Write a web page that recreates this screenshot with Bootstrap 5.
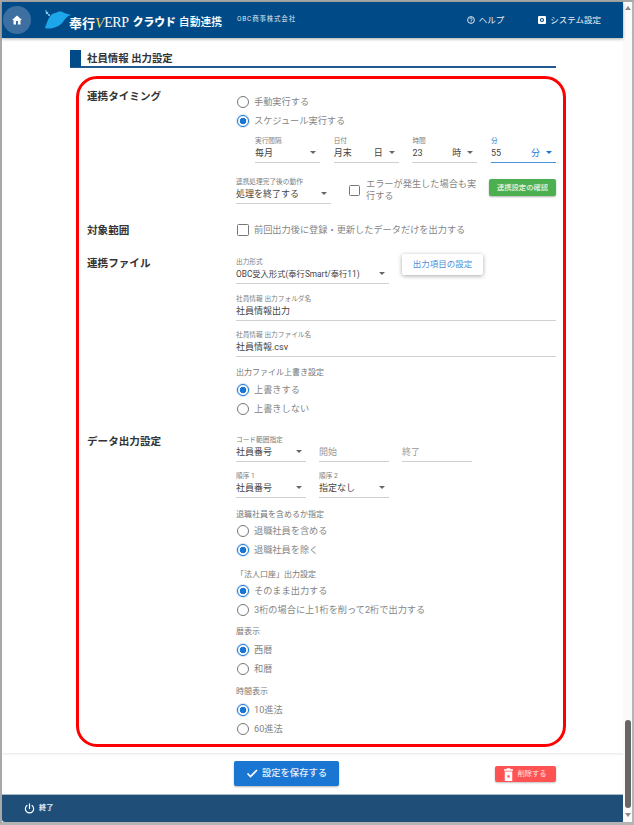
<!DOCTYPE html>
<html lang="ja">
<head>
    <meta charset="UTF-8">
    <meta name="viewport" content="width=device-width, initial-scale=1.0">
    <title>社員情報 出力設定</title>
    <link href="https://cdn.jsdelivr.net/npm/bootstrap@5.3.0/dist/css/bootstrap.min.css" rel="stylesheet">
    <style>
        html, body { height: 100%; overflow: hidden; }
        body {
            font-family: Roboto, "Noto Sans CJK JP", sans-serif;
            font-size: 9.2px;
            color: #333;
            background: #fff;
        }
        .shell {
            height: 825px;
            border-top: 2px solid #a8a8a8;
            border-left: 2px solid #a8a8a8;
            border-bottom: 3px solid #b4b4b4;
            border-right: 2px solid #b4b4b4;
        }
        .main { width: 621px; flex: none; }

        /* header */
        .app-header {
            height: 36px;
            background: #004b87;
            box-shadow: 0 1px 3px rgba(0, 0, 0, .35);
            padding: 0;
            flex-wrap: nowrap;
            justify-content: flex-start;
            color: #fff;
        }
        .home-btn {
            width: 28px;
            height: 28px;
            margin-left: 1px;
            background: #3d70a0;
        }
        .logo { margin-left: 13px; width: 189px; line-height: 1; white-space: nowrap; }
        .logo-word { padding-top: 6px; }
        .logo-hoko { font-size: 13px; font-weight: 700; margin-left: -2px; }
        .logo-v { font-family: "Liberation Serif", serif; font-style: italic; font-size: 15px; color: #f1d35c; }
        .logo-erp { font-family: "Liberation Serif", serif; font-size: 14px; letter-spacing: -.4px; }
        .logo-cloud { font-size: 10.8px; font-weight: 900; margin-left: 4px; }
        .logo-sync { font-size: 10.8px; font-weight: 500; margin-left: 3px; }
        .company { font-size: 6.5px; letter-spacing: .8px; margin-left: 4px; color: #dfe8f0; }
        .head-link { font-size: 8.5px; color: #e8eef4; text-decoration: none; }
        .head-help { margin-left: auto; margin-right: 34px; }
        .head-system { margin-right: 22px; }

        /* scroll area */
        .content { flex: 1; min-height: 0; overflow: hidden; padding: 13px 67px 0 68px; }
        .page-title {
            height: 17px;
            border-bottom: 2px solid #20598f;
            font-size: 10.4px;
            font-weight: 700;
        }
        .page-title::before { content: ""; width: 11px; height: 17px; background: #004b87; margin-right: 6px; }
        .frame {
            width: 490px;
            height: 671px;
            margin: 8px 0 0 6px;
            border: 3px solid #f00;
            border-radius: 21px;
            padding: 8px 7px 0 8px;
        }
        .sec-title { width: 149px; flex: none; font-size: 10.6px; font-weight: 700; line-height: 20px; }
        .sec-body { width: 320px; flex: none; }

        /* radio and checkbox */
        .opt { min-height: 0; height: 18.5px; padding: 0; margin: 0; display: flex; align-items: center; }
        .opt .form-check-input {
            float: none;
            width: 12px;
            height: 12px;
            margin: 0 5px 0 1px;
            flex: none;
            background-image: none;
            background-color: #fff;
            border: 1.4px solid #777;
        }
        .opt .form-check-input[type=radio]:checked {
            border-color: #1976d2;
            background-image: radial-gradient(circle, #1976d2 0, #1976d2 3px, #fff 3.6px);
            box-shadow: 0 0 0 1px #d6e6f6;
        }
        .opt .form-check-input[type=checkbox] { border-radius: 1.5px; }
        .opt .form-check-label { color: #858585; line-height: 12px; }
        .check-wrap { width: 130px; height: 26px; margin-left: 17px; }
        .check-wrap .form-check-input { width: 11px; height: 11px; margin-right: 6px; }

        /* floating fields */
        .fld { display: block; height: 27px; flex: none; }
        .fld-label { display: block; font-size: 6.7px; line-height: 10px; color: #7c7c7c; white-space: nowrap; }
        .fld-box {
            display: flex;
            align-items: center;
            width: 100%;
            height: 17px;
            padding: 0 0 3px;
            border: 0;
            border-bottom: 1.5px solid #d0d0d0;
            border-radius: 0;
            background: transparent;
            font-size: 9px;
            line-height: 12px;
            color: #444;
            box-shadow: none;
        }
        .fld-box::placeholder { color: #999; }
        .fld-box.dropdown-toggle::after {
            margin-left: 6px;
            margin-right: 4px;
            border-top-width: 3px;
            border-left-width: 3px;
            border-right-width: 3px;
            color: #666;
        }
        .suffix { margin-left: auto; }
        .fld-on .fld-label, .fld-on .fld-box, .fld-on .dropdown-toggle::after { color: #1976d2; }
        .fld-on .fld-box { border-bottom-color: #4a90e0; color: #1976d2; }
        .fld-on .value { color: #444; }
        .timing-row { margin-left: 19px; column-gap: 13.7px; }
        .w-sm { width: 65px; }
        .w-select { width: 95px; }
        .w-format { width: 153px; }
        .w-format .fld-box { font-size: 8.3px; }
        .w-full { width: 320px; }
        .w-code { width: 69.5px; }
        .code-row { column-gap: 13.5px; }
        .group-label { font-size: 8px; line-height: 14px; color: #777; }

        /* buttons */
        .btn-confirm {
            width: 67px;
            height: 17px;
            margin: 2px 0 0 11px;
            padding: 0;
            font-size: 7.3px;
            font-weight: 500;
            line-height: 17px;
            color: #eaf5ea;
            background: #4caf50;
            border: 0;
            border-radius: 2px;
            box-shadow: 0 1px 2px rgba(0, 0, 0, .3);
        }
        .btn-items {
            width: 81px;
            height: 21px;
            margin: 0 0 0 13px;
            padding: 0;
            font-size: 8.5px;
            color: #4a90d9;
            background: #fff;
            border: 0;
            border-radius: 2px;
            box-shadow: 0 1px 4px rgba(0, 0, 0, .35);
        }
        .action-bar {
            height: 41px;
            padding: 0 67px 0 232px;
            border-top: 1px solid #eee;
            box-shadow: inset 0 2px 2px -1px rgba(0, 0, 0, .05);
        }
        .btn-save {
            width: 105px;
            height: 25px;
            padding: 0;
            margin-top: -2px;
            font-size: 9.3px;
            font-weight: 500;
            color: #e8f1fa;
            background: #1976d2;
            border: 0;
            border-radius: 2px;
            box-shadow: 0 1px 2px rgba(0, 0, 0, .3);
        }
        .btn-delete {
            width: 61px;
            height: 16px;
            padding: 0;
            font-size: 7.3px;
            color: #ffe3e3;
            background: #ff5252;
            border: 0;
            border-radius: 2px;
            box-shadow: 0 1px 2px rgba(0, 0, 0, .25);
        }
        .app-footer {
            height: 28px;
            padding-left: 22px;
            background: #1f4e79;
            border-top: 1px solid #a9b9c8;
            border-bottom-left-radius: 3px;
            color: #e8eef4;
            font-size: 7.2px;
            font-weight: 700;
        }

        /* fake scrollbar */
        .scroll-rail { width: 9px; flex: none; background: #fafafa; padding: 0 1px; }
        .scroll-thumb { width: 6px; height: 88px; margin: auto auto 0; background: #666; border-radius: 3px; }
        .arrow-up, .arrow-down { width: 0; height: 0; margin: 4px auto; border: 3px solid transparent; }
        .arrow-up { border-top: 0; border-bottom: 4px solid #8a8a8a; }
        .arrow-down { border-bottom: 0; border-top: 4px solid #8a8a8a; margin-top: 5px; margin-bottom: 5px; }

        .mt-1px { margin-top: 1px; }
        .mt-2px { margin-top: 2px; }
        .mt-3px { margin-top: 3px; }
        .mt-6px { margin-top: 6px; }
        .mt-7px { margin-top: 7px; }
        .mt-9px { margin-top: 9px; }
        .mt-10px { margin-top: 10px; }
        .mt-13px { margin-top: 13px; }
        .mt-14px { margin-top: 14px; }
        .mt-17px { margin-top: 17px; }
    </style>
</head>
<body>
<div class="shell d-flex">
    <div class="main d-flex flex-column">
        <nav class="navbar app-header">
            <a class="home-btn rounded-circle d-flex align-items-center justify-content-center" href="#" aria-label="ホーム">
                <svg width="12" height="12" viewBox="0 0 24 24" fill="#fff"><path d="M10 21v-7h4v7h5v-9h3L12 3 2 12h3v9z"/></svg>
            </a>
            <div class="logo d-flex align-items-center">
                <svg width="27" height="20" viewBox="0 0 27 20">
                    <path d="M1 18C2 15 3 12 5 8 6 5 9 3 12 3c2-2 6-2 8 0l7 2c-4 1-6 4-8 7-2 3-6 5-10 6-3 .5-6 1-8 0z" fill="#1ea6ea"/>
                    <circle cx="3" cy="3" r="1.3" fill="#7fd0f5"/><circle cx="5" cy="5" r="1" fill="#7fd0f5"/><circle cx="2" cy="1" r=".8" fill="#7fd0f5"/>
                </svg>
                <div class="logo-word d-flex align-items-center">
                    <span class="logo-hoko">奉行</span><span class="logo-v">V</span><span class="logo-erp">ERP</span><span class="logo-cloud">クラウド</span><span class="logo-sync">自動連携</span>
                </div>
            </div>
            <span class="company">OBC商事株式会社</span>
            <a class="head-link head-help d-flex align-items-center gap-1" href="#">
                <svg width="8" height="8" viewBox="0 0 16 16" fill="none" stroke="#fff" stroke-width="1.7"><circle cx="8" cy="8" r="6.8"/><path d="M5.6 6.2a2.4 2.4 0 1 1 3.6 2.1c-.8.5-1.2.9-1.2 1.8M8 11.200v1.600"/></svg>
                ヘルプ
            </a>
            <a class="head-link head-system d-flex align-items-center gap-1" href="#">
                <svg width="8" height="8" viewBox="0 0 16 16"><rect width="16" height="16" rx="2" fill="#fff"/><circle cx="8" cy="8" r="3" fill="none" stroke="#004b87" stroke-width="2.2"/></svg>
                システム設定
            </a>
        </nav>

        <div class="content">
            <div class="page-title d-flex align-items-center">社員情報 出力設定</div>

            <form class="frame">
                <div class="d-flex">
                    <div class="sec-title">連携タイミング</div>
                    <div class="sec-body">
                        <div class="form-check opt mt-6px">
                            <input class="form-check-input" type="radio" name="run" id="run1">
                            <label class="form-check-label" for="run1">手動実行する</label>
                        </div>
                        <div class="form-check opt">
                            <input class="form-check-input" type="radio" name="run" id="run2" checked>
                            <label class="form-check-label" for="run2">スケジュール実行する</label>
                        </div>
                        <div class="d-flex timing-row mt-6px">
                            <div class="fld w-sm">
                                <span class="fld-label">実行間隔</span>
                                <button type="button" class="btn fld-box dropdown-toggle"><span class="value">毎月</span><span class="suffix"></span></button>
                            </div>
                            <div class="fld w-sm">
                                <span class="fld-label">日付</span>
                                <button type="button" class="btn fld-box dropdown-toggle"><span class="value">月末</span><span class="suffix">日</span></button>
                            </div>
                            <div class="fld w-sm">
                                <span class="fld-label">時間</span>
                                <button type="button" class="btn fld-box dropdown-toggle"><span class="value">23</span><span class="suffix">時</span></button>
                            </div>
                            <div class="fld w-sm fld-on">
                                <span class="fld-label">分</span>
                                <button type="button" class="btn fld-box dropdown-toggle"><span class="value">55</span><span class="suffix">分</span></button>
                            </div>
                        </div>
                        <div class="d-flex mt-14px">
                            <div class="fld w-select">
                                <span class="fld-label">連携処理完了後の動作</span>
                                <button type="button" class="btn fld-box dropdown-toggle"><span class="value">処理を終了する</span><span class="suffix"></span></button>
                            </div>
                            <div class="form-check opt check-wrap">
                                <input class="form-check-input" type="checkbox" id="onError">
                                <label class="form-check-label" for="onError">エラーが発生した場合も実行する</label>
                            </div>
                            <button type="button" class="btn btn-confirm">連携設定の確認</button>
                        </div>
                    </div>
                </div>

                <div class="d-flex mt-17px">
                    <div class="sec-title">対象範囲</div>
                    <div class="sec-body">
                        <div class="form-check opt">
                            <input class="form-check-input" type="checkbox" id="diffOnly">
                            <label class="form-check-label" for="diffOnly">前回出力後に登録・更新したデータだけを出力する</label>
                        </div>
                    </div>
                </div>

                <div class="d-flex mt-13px">
                    <div class="sec-title">連携ファイル</div>
                    <div class="sec-body">
                        <div class="d-flex align-items-start">
                            <div class="fld w-format mt-3px">
                                <span class="fld-label">出力形式</span>
                                <button type="button" class="btn fld-box dropdown-toggle"><span class="value">OBC受入形式(奉行Smart/奉行11)</span><span class="suffix"></span></button>
                            </div>
                            <button type="button" class="btn btn-items">出力項目の設定</button>
                        </div>
                        <div class="fld w-full mt-10px">
                            <label class="fld-label" for="folder">社員情報 出力フォルダ名</label>
                            <input class="form-control fld-box" id="folder" value="社員情報出力">
                        </div>
                        <div class="fld w-full mt-9px">
                            <label class="fld-label" for="file">社員情報 出力ファイル名</label>
                            <input class="form-control fld-box" id="file" value="社員情報.csv">
                        </div>
                        <div class="group-label mt-9px">出力ファイル上書き設定</div>
                        <div class="form-check opt mt-1px">
                            <input class="form-check-input" type="radio" name="over" id="over1" checked>
                            <label class="form-check-label" for="over1">上書きする</label>
                        </div>
                        <div class="form-check opt">
                            <input class="form-check-input" type="radio" name="over" id="over2">
                            <label class="form-check-label" for="over2">上書きしない</label>
                        </div>
                    </div>
                </div>

                <div class="d-flex mt-14px">
                    <div class="sec-title">データ出力設定</div>
                    <div class="sec-body">
                        <div class="d-flex code-row mt-3px">
                            <div class="fld w-code">
                                <span class="fld-label">コード範囲指定</span>
                                <button type="button" class="btn fld-box dropdown-toggle"><span class="value">社員番号</span><span class="suffix"></span></button>
                            </div>
                            <div class="fld w-code">
                                <span class="fld-label">&nbsp;</span>
                                <input class="form-control fld-box" placeholder="開始">
                            </div>
                            <div class="fld w-code">
                                <span class="fld-label">&nbsp;</span>
                                <input class="form-control fld-box" placeholder="終了">
                            </div>
                        </div>
                        <div class="d-flex code-row mt-9px">
                            <div class="fld w-code">
                                <span class="fld-label">順序 1</span>
                                <button type="button" class="btn fld-box dropdown-toggle"><span class="value">社員番号</span><span class="suffix"></span></button>
                            </div>
                            <div class="fld w-code">
                                <span class="fld-label">順序 2</span>
                                <button type="button" class="btn fld-box dropdown-toggle"><span class="value">指定なし</span><span class="suffix"></span></button>
                            </div>
                        </div>
                        <div class="group-label mt-10px">退職社員を含めるか指定</div>
                        <div class="form-check opt">
                            <input class="form-check-input" type="radio" name="ret" id="ret1">
                            <label class="form-check-label" for="ret1">退職社員を含める</label>
                        </div>
                        <div class="form-check opt">
                            <input class="form-check-input" type="radio" name="ret" id="ret2" checked>
                            <label class="form-check-label" for="ret2">退職社員を除く</label>
                        </div>
                        <div class="group-label mt-9px">「法人口座」出力設定</div>
                        <div class="form-check opt">
                            <input class="form-check-input" type="radio" name="corp" id="corp1" checked>
                            <label class="form-check-label" for="corp1">そのまま出力する</label>
                        </div>
                        <div class="form-check opt">
                            <input class="form-check-input" type="radio" name="corp" id="corp2">
                            <label class="form-check-label" for="corp2">3桁の場合に上1桁を削って2桁で出力する</label>
                        </div>
                        <div class="group-label mt-6px">暦表示</div>
                        <div class="form-check opt mt-2px">
                            <input class="form-check-input" type="radio" name="cal" id="cal1" checked>
                            <label class="form-check-label" for="cal1">西暦</label>
                        </div>
                        <div class="form-check opt">
                            <input class="form-check-input" type="radio" name="cal" id="cal2">
                            <label class="form-check-label" for="cal2">和暦</label>
                        </div>
                        <div class="group-label mt-7px">時間表示</div>
                        <div class="form-check opt mt-2px">
                            <input class="form-check-input" type="radio" name="time" id="time1" checked>
                            <label class="form-check-label" for="time1">10進法</label>
                        </div>
                        <div class="form-check opt">
                            <input class="form-check-input" type="radio" name="time" id="time2">
                            <label class="form-check-label" for="time2">60進法</label>
                        </div>
                    </div>
                </div>
            </form>
        </div>

        <div class="action-bar d-flex align-items-center">
            <button type="button" class="btn btn-save d-flex align-items-center justify-content-center gap-1">
                <svg width="12" height="12" viewBox="0 0 24 24" fill="none" stroke="#fff" stroke-width="3.4"><path d="M3 13l6 6L22 6"/></svg>
                設定を保存する
            </button>
            <button type="button" class="btn btn-delete ms-auto d-flex align-items-center justify-content-center gap-1">
                <svg width="9" height="13" viewBox="0 0 12 17" fill="#fff"><path d="M4 0h4l1 1.500h3v2H0v-2h3zM1 4.500h10V17H1zm3.500 5v3h3v-3z" fill-rule="evenodd"/></svg>
                削除する
            </button>
        </div>

        <div class="app-footer d-flex align-items-center gap-1">
            <svg width="11" height="11" viewBox="0 0 24 24" fill="none" stroke="#fff" stroke-width="2.6" stroke-linecap="round"><path d="M12 2v10M6.500 5.500a9 9 0 1 0 11 0"/></svg>
            終了
        </div>
    </div>

    <div class="scroll-rail d-flex flex-column">
        <div class="arrow-up"></div>
        <div class="scroll-thumb"></div>
        <div class="arrow-down"></div>
    </div>
</div>
<script src="https://cdn.jsdelivr.net/npm/bootstrap@5.3.0/dist/js/bootstrap.bundle.min.js"></script>
</body>
</html>
